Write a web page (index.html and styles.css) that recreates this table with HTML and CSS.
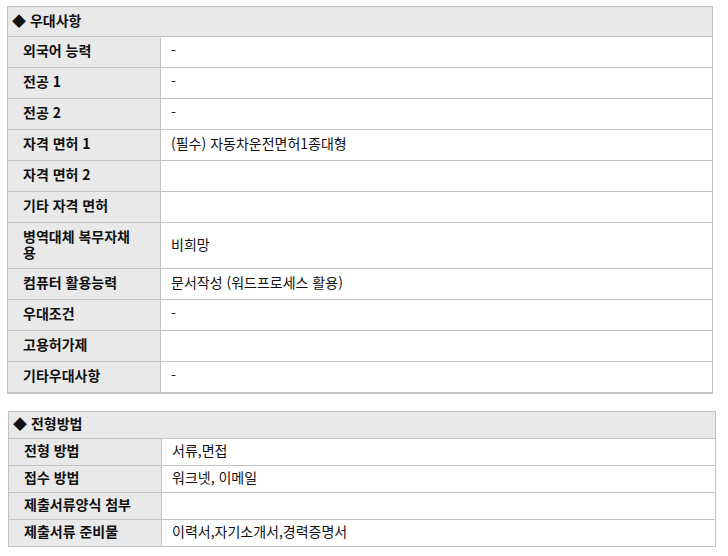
FILE: index.html
```html
<!DOCTYPE html>
<html lang="ko">
<head>
<meta charset="utf-8">
<link rel="stylesheet" href="styles.css">
</head>
<body>
<div class="section s1">
  <div class="head">◆ 우대사항</div>
  <div class="row"><div class="label">외국어 능력</div><div class="value">-</div></div>
  <div class="row"><div class="label">전공 1</div><div class="value">-</div></div>
  <div class="row"><div class="label">전공 2</div><div class="value">-</div></div>
  <div class="row"><div class="label">자격 면허 1</div><div class="value">(필수) 자동차운전면허1종대형</div></div>
  <div class="row"><div class="label">자격 면허 2</div><div class="value"></div></div>
  <div class="row"><div class="label">기타 자격 면허</div><div class="value"></div></div>
  <div class="row tall"><div class="label">병역대체 복무자채<br>용</div><div class="value">비희망</div></div>
  <div class="row"><div class="label">컴퓨터 활용능력</div><div class="value">문서작성 (워드프로세스 활용)</div></div>
  <div class="row"><div class="label">우대조건</div><div class="value">-</div></div>
  <div class="row"><div class="label">고용허가제</div><div class="value"></div></div>
  <div class="row"><div class="label">기타우대사항</div><div class="value">-</div></div>
</div>
<div class="section s2">
  <div class="head">◆ 전형방법</div>
  <div class="row"><div class="label">전형 방법</div><div class="value">서류,면접</div></div>
  <div class="row"><div class="label">접수 방법</div><div class="value">워크넷, 이메일</div></div>
  <div class="row"><div class="label">제출서류양식 첨부</div><div class="value"></div></div>
  <div class="row"><div class="label">제출서류 준비물</div><div class="value">이력서,자기소개서,경력증명서</div></div>
</div>
</body>
</html>
```

FILE: styles.css
```css
html, body {
  margin: 0;
  padding: 0;
  background: #fff;
}
body {
  padding: 6px 0 0 7px;
  font-family: "Noto Sans CJK KR", "Noto Sans", sans-serif;
  font-size: 14px;
  color: #111;
}
.section {
  border: 1px solid #c3c3c3;
  box-sizing: border-box;
}
.s1 {
  width: 706px;
  border-bottom-width: 2px;
}
.s2 {
  width: 708px;
  margin: 17px 0 0 1px;
}
.head {
  background: #e9e9e9;
  border-bottom: 1px solid #c3c3c3;
  display: flex;
  align-items: center;
  padding: 0 0 4px 4px;
  font-weight: bold;
  box-sizing: border-box;
  height: 30px;
  line-height: 16px;
}
.s2 .head { height: 27px; }
.row {
  display: grid;
  grid-template-columns: 153px 1fr;
  min-height: 31px;
  border-bottom: 1px solid #c3c3c3;
  box-sizing: border-box;
}
.s2 .row { min-height: 27px; }
.row:last-child { border-bottom: none; min-height: 30px; }
.s2 .row:last-child { min-height: 26px; }
.row.tall { min-height: 46px; }
.label {
  background: #e9e9e9;
  border-right: 1px solid #c3c3c3;
  display: flex;
  align-items: center;
  padding: 0 8px 4px 15px;
  font-weight: bold;
  line-height: 16px;
}
.value {
  display: flex;
  align-items: center;
  padding: 0 0 4px 10px;
  line-height: 16px;
}
```
